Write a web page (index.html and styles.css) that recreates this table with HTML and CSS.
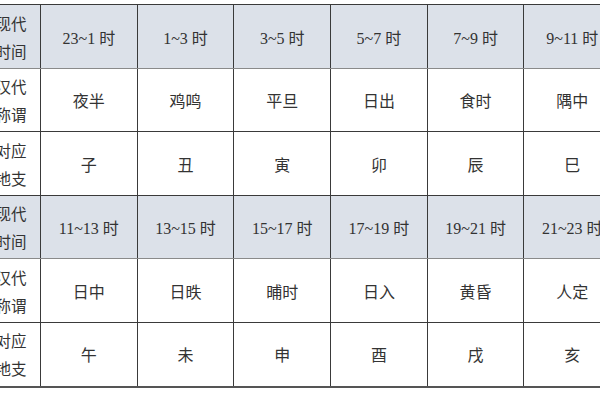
FILE: index.html
```html
<!DOCTYPE html>
<html lang="zh">
<head>
<meta charset="utf-8">
<link rel="stylesheet" href="styles.css">
</head>
<body>
<table class="shichen">
  <colgroup>
    <col class="c-label">
    <col class="c-data"><col class="c-data"><col class="c-data">
    <col class="c-data"><col class="c-data"><col class="c-data">
  </colgroup>
  <tr class="head r1">
    <th class="label">现代<br>时间</th>
    <td>23~1 时</td><td>1~3 时</td><td>3~5 时</td><td>5~7 时</td><td>7~9 时</td><td>9~11 时</td>
  </tr>
  <tr class="r2">
    <th class="label">汉代<br>称谓</th>
    <td>夜半</td><td>鸡鸣</td><td>平旦</td><td>日出</td><td>食时</td><td>隅中</td>
  </tr>
  <tr class="r3">
    <th class="label">对应<br>地支</th>
    <td>子</td><td>丑</td><td>寅</td><td>卯</td><td>辰</td><td>巳</td>
  </tr>
  <tr class="head r2">
    <th class="label">现代<br>时间</th>
    <td>11~13 时</td><td>13~15 时</td><td>15~17 时</td><td>17~19 时</td><td>19~21 时</td><td>21~23 时</td>
  </tr>
  <tr class="r1">
    <th class="label">汉代<br>称谓</th>
    <td>日中</td><td>日昳</td><td>晡时</td><td>日入</td><td>黄昏</td><td>人定</td>
  </tr>
  <tr class="r1 last">
    <th class="label">对应<br>地支</th>
    <td>午</td><td>未</td><td>申</td><td>酉</td><td>戌</td><td>亥</td>
  </tr>
</table>
</body>
</html>
```

FILE: styles.css
```css
html, body {
  margin: 0;
  padding: 0;
  background: #ffffff;
  overflow: hidden;
}
body {
  padding-top: 4px;
  font-family: "Liberation Serif", "Noto Sans CJK SC", serif;
  color: #333333;
}
.shichen {
  border-collapse: collapse;
  table-layout: fixed;
  width: 639px;
  margin-left: -19px;
}
.c-label { width: 59px; }
.c-data { width: 96.7px; }
.shichen td,
.shichen th {
  border: 1px solid #3a3a3a;
  text-align: center;
  vertical-align: middle;
  padding: 0;
  font-size: 16px;
  font-weight: normal;
}
.shichen .label {
  font-family: "Noto Sans CJK SC", sans-serif;
  font-size: 15.5px;
  line-height: 28px;
}
.shichen tr.r1 { height: 64px; }
.shichen tr.r2 { height: 63px; }
.shichen tr.r3 { height: 64px; }
.shichen tr.head td,
.shichen tr.head th {
  background: #dce1e9;
  border-bottom-color: #8a8a8a;
}
.shichen tr.last td,
.shichen tr.last th {
  border-bottom: 2px solid #555555;
}
```
